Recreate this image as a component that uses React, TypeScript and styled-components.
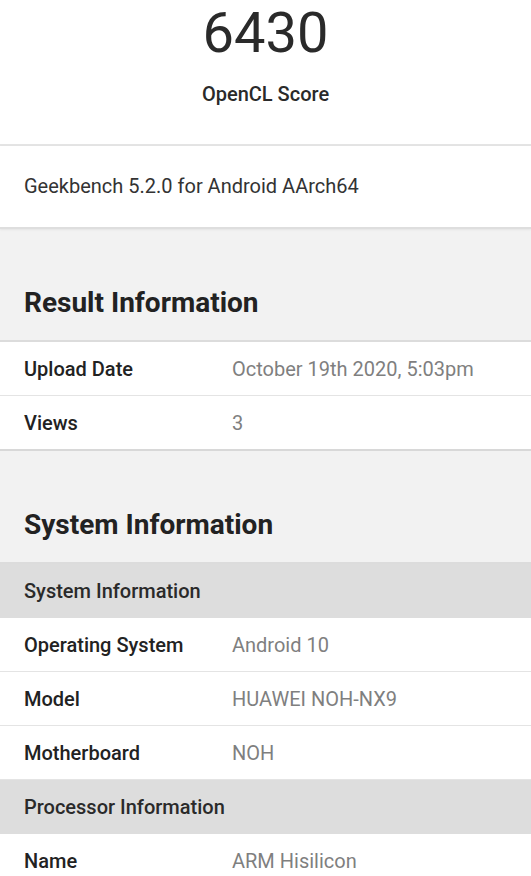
import React from "react";
import styled, { createGlobalStyle } from "styled-components";

const Global = createGlobalStyle`
  html, body { margin: 0; padding: 0; background: #f2f2f2; }
  body { font-family: Roboto, "Noto Sans", Arial, sans-serif; color: #222; -webkit-font-smoothing: antialiased; }
  * { box-sizing: border-box; }
`;

const Page = styled.div`
  display: flex;
  flex-direction: column;
  background: #f2f2f2;
  min-height: 876px;
`;

const ScoreCard = styled.div`
  background: #fff;
  display: flex;
  flex-direction: column;
  align-items: center;
  padding: 0 0 38px;
  border-bottom: 2px solid #e4e4e4;
`;

const Score = styled.div`
  font-size: 56px;
  font-weight: 400;
  color: #2a2a2a;
  line-height: normal;
`;

const ScoreLabel = styled.div`
  margin-top: 16px;
  font-size: 20px;
  font-weight: 500;
  color: #2a2a2a;
  line-height: normal;
`;

const VersionBar = styled.div`
  background: #fff;
  padding: 28px 24px 29px;
  font-size: 20px;
  color: #333;
  line-height: normal;
  border-bottom: 2px solid #dedede;
  box-shadow: 0 1px 2px rgba(0, 0, 0, 0.06);
`;

const Section = styled.section`
  padding-top: 57px;
`;

const Heading = styled.h2`
  margin: 0 0 21px;
  padding: 0 24px;
  font-size: 28px;
  font-weight: 700;
  color: #222;
  line-height: normal;
`;

const Table = styled.div`
  display: flex;
  flex-direction: column;
  border-top: 2px solid #dcdcdc;
  border-bottom: 2px solid #d8d8d8;
`;

const Row = styled.div<{ $group?: boolean }>`
  display: grid;
  grid-template-columns: 208px 1fr;
  align-items: center;
  height: 54px;
  padding: 0 24px;
  background: ${(p) => (p.$group ? "#dddddd" : "#fff")};
  border-bottom: ${(p) => (p.$group ? "none" : "1px solid #e4e4e4")};
  &:last-child { border-bottom: none; height: 53px; }
`;

const Label = styled.div`
  font-size: 20px;
  font-weight: 500;
  color: #222;
`;

const GroupLabel = styled.div`
  grid-column: 1 / -1;
  font-size: 20px;
  font-weight: 500;
  color: #2a2a2a;
`;

const Value = styled.div`
  font-size: 20px;
  font-weight: 400;
  color: #7f7f7f;
`;

type Item = { label: string; value?: string; group?: boolean };

const result: Item[] = [
  { label: "Upload Date", value: "October 19th 2020, 5:03pm" },
  { label: "Views", value: "3" },
];

const system: Item[] = [
  { label: "System Information", group: true },
  { label: "Operating System", value: "Android 10" },
  { label: "Model", value: "HUAWEI NOH-NX9" },
  { label: "Motherboard", value: "NOH" },
  { label: "Processor Information", group: true },
  { label: "Name", value: "ARM Hisilicon" },
];

const InfoTable = ({ items }: { items: Item[] }) => (
  <Table>
    {items.map((it) =>
      it.group ? (
        <Row key={it.label} $group>
          <GroupLabel>{it.label}</GroupLabel>
        </Row>
      ) : (
        <Row key={it.label}>
          <Label>{it.label}</Label>
          <Value>{it.value}</Value>
        </Row>
      )
    )}
  </Table>
);

export default function App() {
  return (
    <Page>
      <Global />
      <ScoreCard>
        <Score>6430</Score>
        <ScoreLabel>OpenCL Score</ScoreLabel>
      </ScoreCard>
      <VersionBar>Geekbench 5.2.0 for Android AArch64</VersionBar>
      <Section>
        <Heading>Result Information</Heading>
        <InfoTable items={result} />
      </Section>
      <Section>
        <Heading>System Information</Heading>
        <InfoTable items={system} />
      </Section>
    </Page>
  );
}
